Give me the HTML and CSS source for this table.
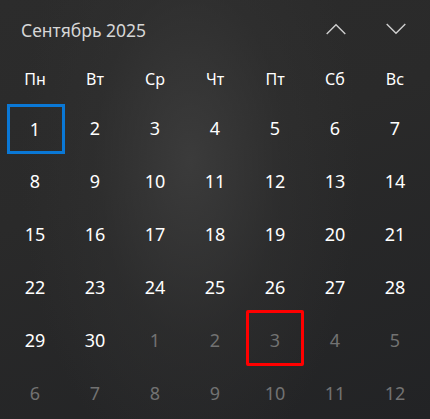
FILE: index.html
```html
<!DOCTYPE html>
<html lang="ru">
<head>
<meta charset="utf-8">
<link rel="stylesheet" href="styles.css">
</head>
<body>
<div class="cal">
  <div class="head">
    <div class="title">Сентябрь 2025</div>
    <div class="nav"><svg width="20" height="12" viewBox="0 0 20 12"><polyline points="0.7,11 10,1.7 19.3,11" /></svg></div>
    <div class="nav"><svg width="20" height="12" viewBox="0 0 20 12"><polyline points="0.7,1 10,10.3 19.3,1" /></svg></div>
  </div>
  <div class="grid">
    <div class="dow">Пн</div><div class="dow">Вт</div><div class="dow">Ср</div><div class="dow">Чт</div><div class="dow">Пт</div><div class="dow">Сб</div><div class="dow">Вс</div>
    <div class="d today">1</div><div class="d">2</div><div class="d">3</div><div class="d">4</div><div class="d">5</div><div class="d">6</div><div class="d">7</div>
    <div class="d">8</div><div class="d">9</div><div class="d">10</div><div class="d">11</div><div class="d">12</div><div class="d">13</div><div class="d">14</div>
    <div class="d">15</div><div class="d">16</div><div class="d">17</div><div class="d">18</div><div class="d">19</div><div class="d">20</div><div class="d">21</div>
    <div class="d">22</div><div class="d">23</div><div class="d">24</div><div class="d">25</div><div class="d">26</div><div class="d">27</div><div class="d">28</div>
    <div class="d">29</div><div class="d">30</div><div class="d o">1</div><div class="d o">2</div><div class="d o mark">3</div><div class="d o">4</div><div class="d o">5</div>
    <div class="d o">6</div><div class="d o">7</div><div class="d o">8</div><div class="d o">9</div><div class="d o">10</div><div class="d o">11</div><div class="d o">12</div>
  </div>
</div>
</body>
</html>
```

FILE: styles.css
```css
html, body {
  margin: 0;
  padding: 0;
}
body {
  width: 430px;
  height: 419px;
  overflow: hidden;
  background: #242424;
  font-family: "Noto Sans", "Segoe UI", sans-serif;
}
.cal {
  width: 430px;
  height: 419px;
  background:
    radial-gradient(ellipse 170px 320px at 190px 160px, rgba(62,62,62,0.85), rgba(50,50,50,0.45) 55%, rgba(40,40,40,0) 100%),
    linear-gradient(160deg, #2c2c2c 0%, #2a2a2a 40%, #222325 100%);
}
.head {
  display: grid;
  grid-template-columns: 1fr 60px 60px;
  align-items: center;
  height: 56px;
  padding: 0 5px 0 21px;
  box-sizing: border-box;
}
.title {
  color: #d6d6d6;
  font-size: 17.5px;
  line-height: 24px;
  padding-top: 4px;
}
.nav {
  display: flex;
  justify-content: center;
  align-items: center;
  padding-top: 1px;
  padding-left: 1px;
}
.nav svg polyline {
  fill: none;
  stroke: #cfcfcf;
  stroke-width: 1.4;
}
.grid {
  display: grid;
  grid-template-columns: repeat(7, 60px);
  grid-template-rows: 45px repeat(6, 53px);
  padding: 0 5px;
}
.dow {
  display: flex;
  align-items: center;
  justify-content: center;
  color: #ffffff;
  font-size: 16px;
}
.d {
  display: flex;
  align-items: center;
  justify-content: center;
  color: #ffffff;
  font-size: 18px;
  position: relative;
}
.d.o {
  color: #727272;
}
.today {
  margin: 3px 0 0 2px;
  box-shadow: inset 0 0 0 3px #0a78d6;
  padding-right: 2px;
}
.mark::after {
  content: "";
  position: absolute;
  top: -3px;
  left: 1px;
  right: 1px;
  bottom: 0;
  border: 3px solid #ff0000;
  border-radius: 2px;
}
```
